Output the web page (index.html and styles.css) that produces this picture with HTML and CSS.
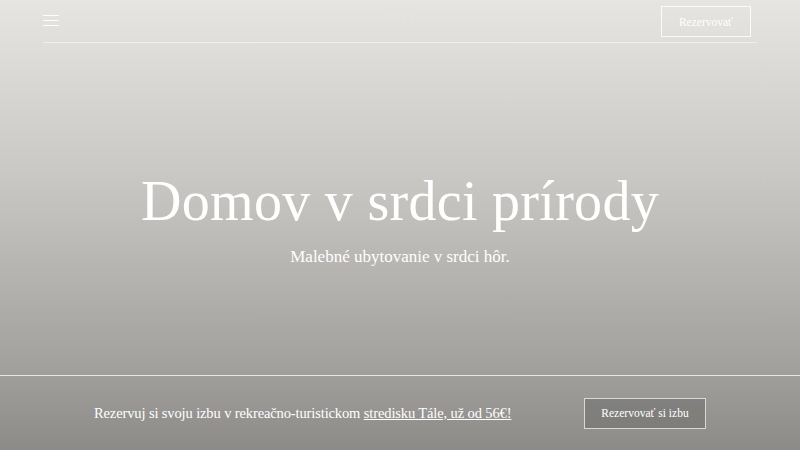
FILE: index.html
```html
<!DOCTYPE html>
<html lang="sk">
<head>
<meta charset="utf-8">
<title>Domov v srdci prírody</title>
<link rel="stylesheet" href="styles.css">
</head>
<body>
<div class="page">
  <header class="header">
    <button class="burger" aria-label="Menu">
      <svg width="16" height="11" viewBox="0 0 16 11"><path d="M0 0.5H16M0 5.5H16M0 10.5H16" stroke="#fff" stroke-width="1"/></svg>
    </button>
    <div class="logo">Tále</div>
    <a class="btn-outline" href="#">Rezervovať</a>
  </header>
  <main class="hero">
    <h1 class="title">Domov v srdci prírody</h1>
    <p class="subtitle">Malebné ubytovanie v srdci hôr.</p>
  </main>
  <footer class="bar">
    <p class="bar-text">Rezervuj si svoju izbu v rekreačno-turistickom <a href="#">stredisku Tále, už od 56€!</a></p>
    <a class="btn-fill" href="#">Rezervovať si izbu</a>
  </footer>
</div>
</body>
</html>
```
FILE: styles.css
```css
* { box-sizing: border-box; }
html, body { margin: 0; height: 100%; }
body {
  font-family: "Liberation Serif", "DejaVu Serif", serif;
  color: #fff;
  background: linear-gradient(to bottom, #e6e5e1 0%, #c8c7c3 40%, #a3a29e 80%, #8c8b88 100%);
}
.page {
  height: 450px;
  display: flex;
  flex-direction: column;
}
.header {
  margin: 0 43px;
  height: 43px;
  border-bottom: 1px solid rgba(255,255,255,0.5);
  display: grid;
  grid-template-columns: 1fr auto 1fr;
  align-items: start;
}
.burger {
  background: none;
  border: 0;
  padding: 0;
  margin-top: 15px;
  width: 16px;
  height: 11px;
  display: block;
  cursor: pointer;
}
.burger svg { display: block; }
.logo {
  margin-top: 8px;
  font-size: 16px;
  color: rgba(255,255,255,0.1);
  letter-spacing: 2px;
}
.btn-outline {
  justify-self: end;
  margin-top: 6px;
  margin-right: 6px;
  width: 90px;
  height: 31px;
  border: 1px solid rgba(255,255,255,0.85);
  color: #fff;
  text-decoration: none;
  font-size: 11.5px;
  display: flex;
  align-items: center;
  justify-content: center;
}
.hero {
  flex: 1;
  display: flex;
  flex-direction: column;
  align-items: center;
  padding-top: 126px;
}
.title {
  margin: 0;
  font-weight: normal;
  font-size: 56px;
  line-height: 64px;
  letter-spacing: 0.3px;
}
.subtitle {
  margin: 14px 0 0;
  font-size: 17px;
}
.bar {
  height: 75px;
  border-top: 1px solid rgba(255,255,255,0.75);
  display: flex;
  align-items: center;
  justify-content: space-between;
  padding: 0 94px;
}
.bar-text {
  margin: 0;
  font-size: 14.5px;
  white-space: nowrap;
  letter-spacing: -0.12px;
}
.bar-text a { color: #fff; }
.btn-fill {
  flex: none;
  width: 122px;
  height: 31px;
  background: rgba(110,109,107,0.55);
  border: 1px solid rgba(255,255,255,0.7);
  color: #fff;
  text-decoration: none;
  font-size: 11.5px;
  display: flex;
  align-items: center;
  justify-content: center;
}
```
